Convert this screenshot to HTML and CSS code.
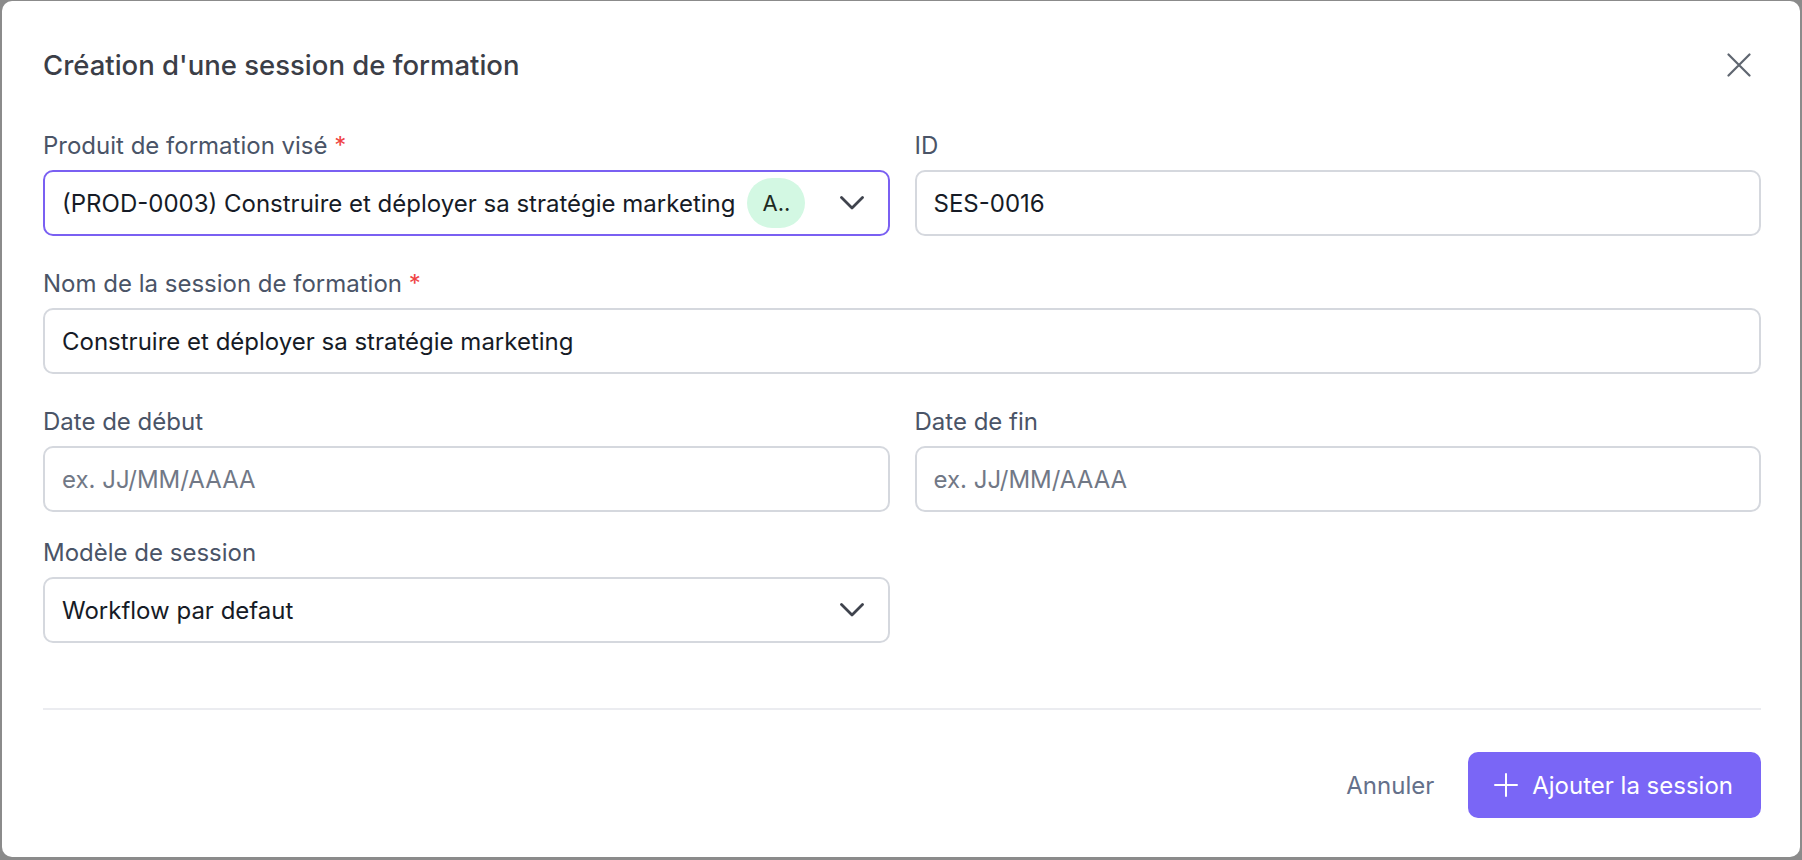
FILE: index.html
```html
<!DOCTYPE html>
<html lang="fr">
  <head>
    <meta charset="UTF-8" />
    <link rel="stylesheet" href="styles.css">
  </head>
  <body>
    <div class="modal">
      <div class="modal-header">
        <h2 class="modal-title">Création d'une session de formation</h2>
        <button class="close-btn" aria-label="Fermer">
          <svg width="24" height="24" viewBox="0 0 24 24" fill="none" stroke="currentColor" stroke-width="2.2" stroke-linecap="round">
            <path d="M1.5 1.5l21 21M22.5 1.5l-21 21" />
          </svg>
        </button>
      </div>

      <form class="form-grid">
        <div class="field">
          <label>Produit de formation visé <span class="required">*</span></label>
          <div class="control select focused">
            <span class="value">(PROD-0003) Construire et déployer sa stratégie marketing</span>
            <span class="chip">A..</span>
            <svg class="chevron" width="24" height="24" viewBox="0 0 24 24" fill="none" stroke="currentColor" stroke-width="2.8" stroke-linecap="round" stroke-linejoin="round">
              <path d="M1.5 6.5l10.5 10.5 10.5-10.5" />
            </svg>
          </div>
        </div>

        <div class="field">
          <label>ID</label>
          <div class="control">
            <span class="value">SES-0016</span>
          </div>
        </div>

        <div class="field wide">
          <label>Nom de la session de formation <span class="required">*</span></label>
          <div class="control">
            <span class="value">Construire et déployer sa stratégie marketing</span>
          </div>
        </div>

        <div class="field">
          <label>Date de début</label>
          <div class="control">
            <span class="placeholder">ex. JJ/MM/AAAA</span>
          </div>
        </div>

        <div class="field">
          <label>Date de fin</label>
          <div class="control">
            <span class="placeholder">ex. JJ/MM/AAAA</span>
          </div>
        </div>

        <div class="field template-field">
          <label>Modèle de session</label>
          <div class="control select">
            <span class="value">Workflow par defaut</span>
            <svg class="chevron" width="24" height="24" viewBox="0 0 24 24" fill="none" stroke="currentColor" stroke-width="2.8" stroke-linecap="round" stroke-linejoin="round">
              <path d="M1.5 6.5l10.5 10.5 10.5-10.5" />
            </svg>
          </div>
        </div>
      </form>

      <div class="modal-footer">
        <button class="cancel-btn">Annuler</button>
        <button class="primary-btn">
          <svg width="24" height="24" viewBox="0 0 24 24" fill="none" stroke="currentColor" stroke-width="2" stroke-linecap="round">
            <path d="M12 1v22M1 12h22" />
          </svg>
          Ajouter la session
        </button>
      </div>
    </div>
  </body>
</html>
```

FILE: styles.css
```css
body {
  margin: 0;
  padding: 1px 2px 3px 2px;
  background: #8b8b8b;
  font-family: Inter, "Noto Sans", sans-serif;
  box-sizing: border-box;
  height: 100vh;
}
.modal {
  background: white;
  border-radius: 10px;
  height: 100%;
  box-sizing: border-box;
  padding: 0 39px 0 41px;
  display: flex;
  flex-direction: column;
}
.modal-header {
  display: flex;
  align-items: center;
  justify-content: space-between;
  margin-top: 48px;
  height: 32px;
}
.modal-title {
  margin: 0;
  font-size: 27.5px;
  line-height: 32px;
  font-weight: 500;
  color: #3b3e47;
}
.close-btn {
  border: none;
  background: none;
  padding: 0;
  margin-right: 10px;
  color: #5f6670;
  display: flex;
  cursor: pointer;
}
.form-grid {
  margin-top: 51px;
  display: grid;
  grid-template-columns: 1fr 1fr;
  column-gap: 25px;
  row-gap: 34px;
}
.field.wide {
  grid-column: span 2;
}
.template-field {
  margin-top: -7px;
}
.field label {
  display: block;
  font-size: 24px;
  line-height: 28px;
  color: #4a5467;
  margin-bottom: 10px;
}
.required {
  color: #ef4444;
}
.control {
  height: 66px;
  box-sizing: border-box;
  border: 2px solid #d5d8de;
  border-radius: 10px;
  padding: 0 24px 0 17px;
  display: flex;
  align-items: center;
  font-size: 24px;
  color: #161b26;
}
.control.focused {
  border-color: #7a60f2;
}
.value {
  white-space: nowrap;
}
.placeholder {
  color: #717886;
}
.select .chevron {
  margin-left: auto;
  color: #3f434d;
  flex-shrink: 0;
}
.chip {
  margin-left: 12px;
  height: 50px;
  padding: 0 15px;
  border-radius: 25px;
  background: #d3f8e3;
  color: #1d2a22;
  display: flex;
  align-items: center;
  font-size: 22px;
}
.modal-footer {
  margin-top: auto;
  border-top: 2px solid #ebecf0;
  padding: 42px 0 39px;
  display: flex;
  justify-content: flex-end;
  align-items: center;
}
.cancel-btn {
  border: none;
  background: none;
  font-family: inherit;
  font-size: 24px;
  color: #64708a;
  padding: 0 24px;
  height: 66px;
  margin-right: 10px;
  cursor: pointer;
}
.primary-btn {
  height: 66px;
  border: none;
  border-radius: 10px;
  background: #7a66f6;
  color: white;
  font-family: inherit;
  font-size: 24px;
  padding: 0 28px 0 26px;
  display: flex;
  align-items: center;
  gap: 14px;
  cursor: pointer;
}
```
